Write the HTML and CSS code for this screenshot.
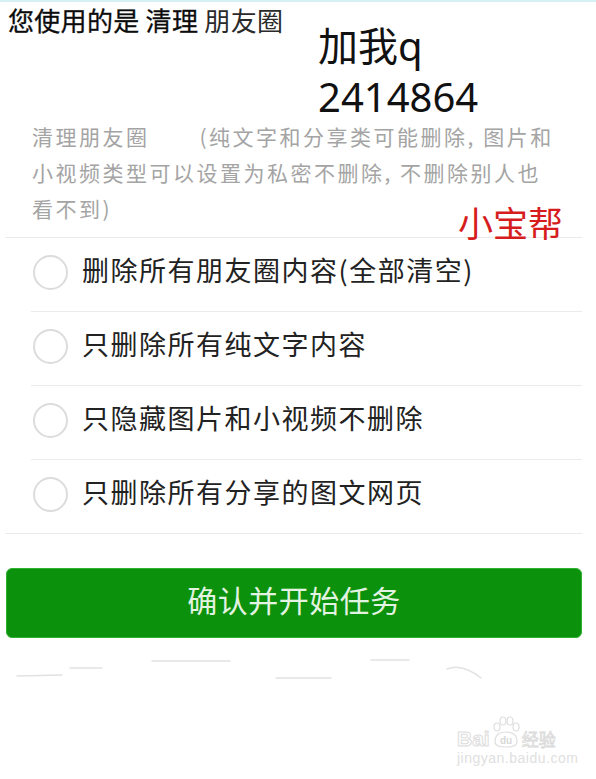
FILE: index.html
```html
<!DOCTYPE html>
<html lang="zh-CN">
<head>
<meta charset="utf-8">
<title>清理朋友圈</title>
<link rel="stylesheet" href="styles.css">
</head>
<body>
<div class="page">
  <div class="topline"></div>
  <div class="title"><span class="strong">您使用的是 清理</span> <span class="light">朋友圈</span></div>

  <div class="note">加我q<br>2414864</div>
  <div class="brand">小宝帮</div>

  <p class="desc">清理朋友圈<span class="gap"></span>(纯文字和分享类可能删除, 图片和<br>小视频类型可以设置为私密不删除, 不删除别人也<br>看不到)</p>

  <div class="divider"></div>

  <ul class="options">
    <li class="opt"><span class="radio"></span><span class="label">删除所有朋友圈内容(全部清空)</span></li>
    <li class="opt"><span class="radio"></span><span class="label">只删除所有纯文字内容</span></li>
    <li class="opt"><span class="radio"></span><span class="label">只隐藏图片和小视频不删除</span></li>
    <li class="opt last"><span class="radio"></span><span class="label">只删除所有分享的图文网页</span></li>
  </ul>

  <div class="divider"></div>

  <button class="confirm" type="button">确认并开始任务</button>

  <svg class="scraps" width="596" height="40" viewBox="0 0 596 40">
    <g fill="none" stroke="#e2e2e2" stroke-width="1.5" stroke-linecap="round">
      <path d="M17 26 L62 25"/>
      <path d="M70 18 L102 18"/>
      <path d="M152 11 L230 11"/>
      <path d="M276 28 L331 28"/>
      <path d="M371 10 L409 10"/>
      <path d="M447 19 Q462 13 481 28"/>
    </g>
  </svg>

  <div class="watermark">
    <div class="wm-row">
      <span class="wm-bai">Bai</span>
      <svg class="paw" width="30" height="32" viewBox="0 0 30 32">
        <g fill="none" stroke="#dedede" stroke-width="1.2">
          <ellipse cx="6" cy="11" rx="3" ry="4"/>
          <ellipse cx="12" cy="5" rx="3" ry="4"/>
          <ellipse cx="19" cy="5" rx="3" ry="4"/>
          <ellipse cx="25" cy="11" rx="3" ry="4"/>
          <path d="M4 26 Q4 16 15 16 Q26 16 26 26 Q26 31 15 31 Q4 31 4 26 Z"/>
        </g>
        <text x="15" y="28" text-anchor="middle" class="paw-du">du</text>
      </svg>
      <span class="wm-jy">经验</span>
    </div>
    <div class="wm-url">jingyan.baidu.com</div>
  </div>
</div>
</body>
</html>
```

FILE: styles.css
```css
html, body {
  margin: 0;
  padding: 0;
  background: #ffffff;
}

body {
  font-family: "Noto Sans CJK SC", "Noto Sans", sans-serif;
  color: #222222;
}

.page {
  position: relative;
  width: 596px;
  height: 779px;
  overflow: hidden;
}

.topline {
  height: 2px;
  background: #d6f1f4;
}

.title {
  padding-left: 8px;
  font-size: 26px;
  line-height: 36px;
  letter-spacing: 0.3px;
  white-space: nowrap;
}

.title .strong {
  color: #0c0c0c;
  -webkit-text-stroke: 0.3px #0c0c0c;
}

.title .light {
  color: #2a2a2a;
}

.note {
  position: absolute;
  left: 318px;
  top: 20px;
  font-family: "Noto Sans", "Noto Sans CJK SC", sans-serif;
  font-size: 40px;
  line-height: 51px;
  color: #111111;
}

.brand {
  position: absolute;
  left: 458px;
  top: 202px;
  font-size: 35px;
  line-height: 40px;
  color: #d61c1c;
}

.desc {
  margin: 80px 0 0 0;
  padding: 0 0 11px 32px;
  font-size: 21px;
  line-height: 36px;
  letter-spacing: 2.5px;
  color: #a4a4a4;
  white-space: nowrap;
}

.desc .gap {
  display: inline-block;
  width: 50px;
}

.divider {
  height: 1px;
  margin: 0 14px 0 5px;
  background: #ebebeb;
}

.options {
  list-style: none;
  margin: 0 14px 0 31px;
  padding: 0;
}

.opt {
  display: flex;
  align-items: center;
  gap: 14px;
  height: 73px;
  border-bottom: 1px solid #ebebeb;
}

.opt.last {
  border-bottom: none;
}

.radio {
  flex: none;
  box-sizing: border-box;
  width: 35px;
  height: 35px;
  margin: 0 0 4px 2px;
  border: 2px solid #dcdcdc;
  border-radius: 50%;
}

.label {
  margin-bottom: 10px;
  font-size: 27px;
  line-height: 36px;
  letter-spacing: 1.5px;
  color: #222222;
  white-space: nowrap;
}

.confirm {
  display: block;
  box-sizing: border-box;
  width: 576px;
  height: 70px;
  margin: 34px 0 0 6px;
  padding: 0 0 8px 0;
  border: 1px solid #2fb22f;
  border-radius: 6px;
  background: #0b910b;
  color: #e2f3e2;
  font-family: "Noto Sans CJK SC", sans-serif;
  font-size: 30px;
  letter-spacing: 0.5px;
  text-align: center;
}

.scraps {
  display: block;
  margin-top: 12px;
}

.watermark {
  position: absolute;
  left: 457px;
  top: 716px;
  color: #e0e0e0;
}

.wm-row {
  display: flex;
  align-items: flex-end;
}

.wm-bai {
  font-family: "Liberation Sans", sans-serif;
  font-size: 21px;
  font-weight: bold;
  line-height: 18px;
  color: #ffffff;
  -webkit-text-stroke: 1px #dcdcdc;
}

.paw {
  display: block;
  margin: 0 1px 0 1px;
}

.paw-du {
  font-family: "Liberation Sans", sans-serif;
  font-size: 10px;
  font-weight: bold;
  fill: #d8d8d8;
}

.wm-jy {
  font-size: 17px;
  line-height: 18px;
  color: #ffffff;
  -webkit-text-stroke: 0.8px #d8d8d8;
}

.wm-url {
  margin-top: 3px;
  font-family: "Liberation Sans", sans-serif;
  font-size: 14px;
  line-height: 14px;
  letter-spacing: 0.5px;
  color: #e0e0e0;
}
```
